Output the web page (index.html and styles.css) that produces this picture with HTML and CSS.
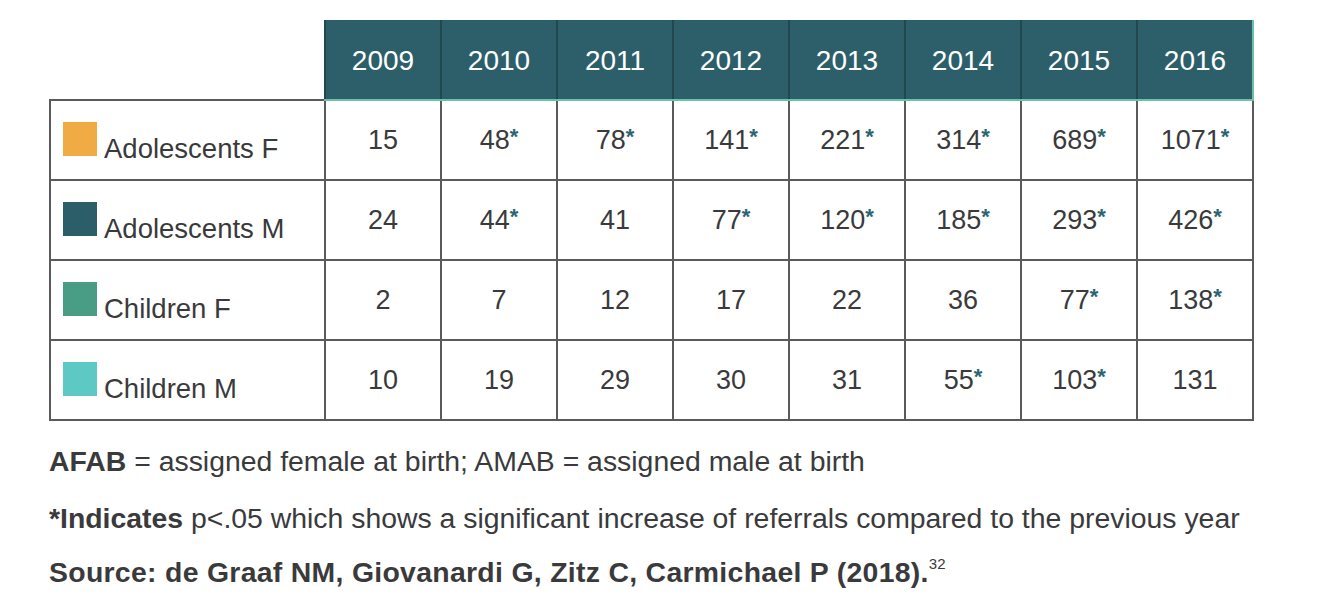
FILE: index.html
```html
<!DOCTYPE html>
<html>
<head>
<meta charset="utf-8">
<link rel="stylesheet" href="styles.css">
</head>
<body>
<div class="page">
<table class="data">
  <thead>
    <tr>
      <th class="blank"></th>
      <th>2009</th><th>2010</th><th>2011</th><th>2012</th><th>2013</th><th>2014</th><th>2015</th><th>2016</th>
    </tr>
  </thead>
  <tbody>
    <tr>
      <td class="label"><span class="sw sw-af"></span><span class="lt">Adolescents F</span></td>
      <td>15</td><td>48<b class="ast">*</b></td><td>78<b class="ast">*</b></td><td>141<b class="ast">*</b></td><td>221<b class="ast">*</b></td><td>314<b class="ast">*</b></td><td>689<b class="ast">*</b></td><td>1071<b class="ast">*</b></td>
    </tr>
    <tr>
      <td class="label"><span class="sw sw-am"></span><span class="lt">Adolescents M</span></td>
      <td>24</td><td>44<b class="ast">*</b></td><td>41</td><td>77<b class="ast">*</b></td><td>120<b class="ast">*</b></td><td>185<b class="ast">*</b></td><td>293<b class="ast">*</b></td><td>426<b class="ast">*</b></td>
    </tr>
    <tr>
      <td class="label"><span class="sw sw-cf"></span><span class="lt">Children F</span></td>
      <td>2</td><td>7</td><td>12</td><td>17</td><td>22</td><td>36</td><td>77<b class="ast">*</b></td><td>138<b class="ast">*</b></td>
    </tr>
    <tr>
      <td class="label"><span class="sw sw-cm"></span><span class="lt">Children M</span></td>
      <td>10</td><td>19</td><td>29</td><td>30</td><td>31</td><td>55<b class="ast">*</b></td><td>103<b class="ast">*</b></td><td>131</td>
    </tr>
  </tbody>
</table>
<div class="notes">
  <p><b>AFAB</b> = assigned female at birth; AMAB = assigned male at birth</p>
  <p><b>*Indicates</b> p&lt;.05 which shows a significant increase of referrals compared to the previous year</p>
  <p><b class="src">Source: de Graaf NM, Giovanardi G, Zitz C, Carmichael P (2018).</b><sup>32</sup></p>
</div>
</div>
</body>
</html>
```
FILE: styles.css
```css
html, body {
  margin: 0;
  padding: 0;
  background: #ffffff;
}
body {
  font-family: "Liberation Sans", Arial, sans-serif;
  color: #3a3a3c;
}
.page {
  padding: 20px 0 0 49px;
}
.data {
  border-collapse: collapse;
  table-layout: fixed;
}
.data th {
  width: 116px;
  height: 80px;
  padding: 3px 0 0 0;
  background: #2c5f6a;
  color: #ffffff;
  font-weight: normal;
  font-size: 28px;
  text-align: center;
  vertical-align: middle;
  border-left: 2px solid #23474f;
  border-bottom: 2px solid #6cc2a8;
  box-sizing: border-box;
}
.data th:last-child {
  border-right: 2px solid #6cc2a8;
}
.data th.blank {
  width: 275px;
  background: transparent;
  border: none;
}
.data td {
  height: 80px;
  padding: 0;
  border: 2px solid #5a5a5c;
  font-size: 27px;
  text-align: center;
  vertical-align: middle;
  box-sizing: border-box;
}
.data td.label {
  text-align: left;
  padding: 0 0 0 12px;
}
.label {
  white-space: nowrap;
}
.label .sw {
  display: inline-block;
  width: 34px;
  height: 34px;
  vertical-align: baseline;
  margin-right: 7px;
  position: relative;
  top: 2px;
}
.label .lt {
  display: inline-block;
  position: relative;
  top: 4px;
  font-size: 27.5px;
}
.sw-af { background: #f0ab45; }
.sw-am { background: #2b5e69; }
.sw-cf { background: #4a9d85; }
.sw-cm { background: #5ec9c4; }
.ast {
  font-weight: bold;
  color: #2b6670;
  font-size: 22px;
  vertical-align: 5px;
}
.notes {
  padding-top: 24px;
}
.notes p {
  margin: 0 0 25px 0;
  font-size: 28.4px;
  line-height: 32px;
}
.notes p:nth-child(2) {
  margin-bottom: 22px;
}
.notes b {
  font-weight: bold;
}
.notes b.src {
  letter-spacing: 0.3px;
}
.notes sup {
  font-size: 15px;
  vertical-align: 13px;
  line-height: 0;
}
```
